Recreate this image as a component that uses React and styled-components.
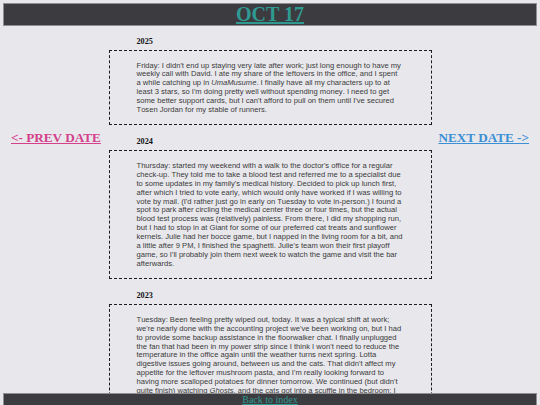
import React from 'react';
import styled, { createGlobalStyle } from 'styled-components';

const GlobalStyle = createGlobalStyle`
    html, body {
        margin: 0;
        padding: 0;
        background: #e8e8ec;
    }
`;

const entries = [
    {
        year: 2025,
        body: (
            <>
                Friday: I didn't end up staying very late after work; just long enough to have my weekly call with
                David. I ate my share of the leftovers in the office, and I spent a while catching up in <i>UmaMusume</i>.
                I finally have all my characters up to at least 3 stars, so I'm doing pretty well without spending
                money. I need to get some better support cards, but I can't afford to pull on them until I've secured
                Tosen Jordan for my stable of runners.
            </>
        )
    },
    {
        year: 2024,
        body: (
            <>
                Thursday: started my weekend with a walk to the doctor's office for a regular check-up. They told me
                to take a blood test and referred me to a specialist due to some updates in my family's medical
                history. Decided to pick up lunch first, after which I tried to vote early, which would only have
                worked if I was willing to vote by mail. (I'd rather just go in early on Tuesday to vote in-person.) I
                found a spot to park after circling the medical center three or four times, but the actual blood test
                process was (relatively) painless. From there, I did my shopping run, but I had to stop in at Giant
                for some of our preferred cat treats and sunflower kernels. Julie had her bocce game, but I napped in
                the living room for a bit, and a little after 9 PM, I finished the spaghetti. Julie's team won their
                first playoff game, so I'll probably join them next week to watch the game and visit the bar
                afterwards.
            </>
        )
    },
    {
        year: 2023,
        body: (
            <>
                Tuesday: Been feeling pretty wiped out, today. It was a typical shift at work; we're nearly done with
                the accounting project we've been working on, but I had to provide some backup assistance in the
                floorwalker chat. I finally unplugged the fan that had been in my power strip since I think I won't
                need to reduce the temperature in the office again until the weather turns next spring. Lotta
                digestive issues going around, between us and the cats. That didn't affect my appetite for the
                leftover mushroom pasta, and I'm really looking forward to having more scalloped potatoes for dinner
                tomorrow. We continued (but didn't quite finish) watching <i>Ghosts</i>, and the cats got into a scuffle
                in the bedroom; I had to break it up before we could turn in for the night.
            </>
        )
    }
];

const Page = styled.div`
    padding: 3px 3px 40px;
`;

const TitleBar = styled.header`
    background: #3c3b40;
    border: 1px solid #8e8e93;
    text-align: center;

    h1 {
        margin: 0;
        font-family: 'Liberation Serif', serif;
        font-weight: 700;
        font-size: 20px;
        line-height: 21px;
    }

    a {
        color: #2f9a91;
    }
`;

const Layout = styled.div`
    display: grid;
    grid-template-columns: 1fr 323px 1fr;
    align-items: start;
`;

const SideNav = styled.nav`
    padding-top: 103.5px;
    padding-left: ${({ align }) => (align === 'left' ? '8px' : '0')};
    padding-right: ${({ align }) => (align === 'right' ? '8px' : '0')};
    text-align: ${({ align }) => align};
    white-space: nowrap;
    font-family: 'Liberation Serif', serif;
    font-weight: 700;
    font-size: 13.2px;
`;

const NavLink = styled.a`
    color: ${({ color }) => color};
    text-decoration: underline;
`;

const Column = styled.main`
    display: flex;
    flex-direction: column;
`;

const Day = styled.section`
    & + & {
        margin-top: 1px;
    }
`;

const Year = styled.h4`
    margin: 11px 0 4px;
    padding-left: 28px;
    font-family: 'Liberation Serif', serif;
    font-weight: 700;
    font-size: 8.2px;
    color: #111;
`;

const Entry = styled.div`
    border: 1px dashed #1c1c1c;
    padding: 10.5px 27.7px 9.5px 27px;
    font-family: 'Liberation Sans', sans-serif;
    font-size: 7.6px;
    line-height: 8.9px;
    font-kerning: none;
    color: #3a3a3a;
`;

const Footer = styled.footer`
    position: fixed;
    left: 3px;
    right: 3px;
    bottom: -4px;
    height: 14px;
    background: #3c3b40;
    border: 1px solid #8e8e93;
    text-align: center;
    font-family: 'Liberation Serif', serif;
    font-size: 10px;
    line-height: 11px;

    a {
        color: #2f9a91;
    }
`;

const App = () => {
    return (
        <Page>
            <GlobalStyle />
            <TitleBar>
                <h1><a href="#">OCT 17</a></h1>
            </TitleBar>
            <Layout>
                <SideNav align="left">
                    <NavLink href="#" color="#d4408b">&lt;- PREV DATE</NavLink>
                </SideNav>
                <Column>
                    {entries.map((entry) => (
                        <Day key={entry.year}>
                            <Year>{entry.year}</Year>
                            <Entry>{entry.body}</Entry>
                        </Day>
                    ))}
                </Column>
                <SideNav align="right">
                    <NavLink href="#" color="#3b8fd4">NEXT DATE -&gt;</NavLink>
                </SideNav>
            </Layout>
            <Footer>
                <a href="#">Back to index</a>
            </Footer>
        </Page>
    );
};

export default App;
